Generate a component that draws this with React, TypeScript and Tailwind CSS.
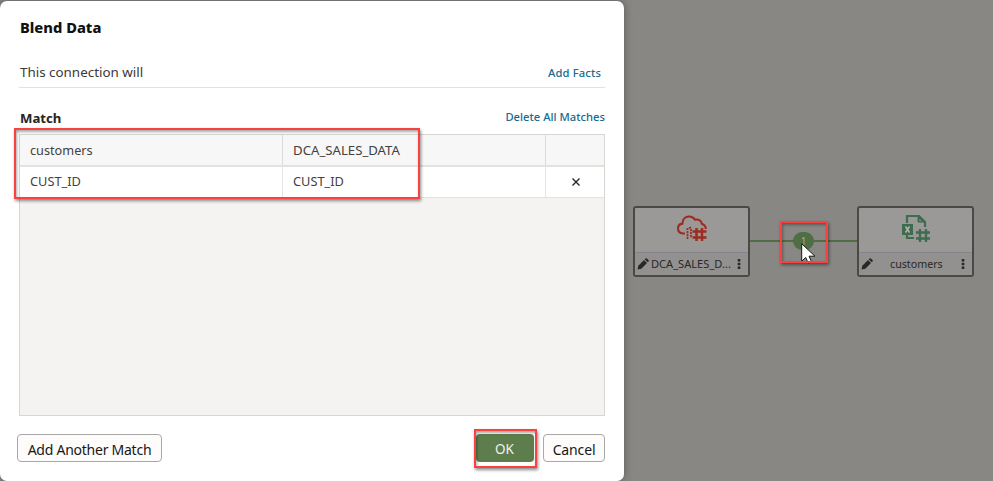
import React from "react";

const font = "font-['Noto_Sans','Open_Sans',sans-serif]";

function Highlight({ className }: { className: string }) {
  return (
    <div
      className={`pointer-events-none absolute z-20 border-[#f9423f] shadow-[1px_2px_3px_rgba(0,0,0,0.45),inset_1px_2px_3px_rgba(0,0,0,0.35)] ${className}`}
    />
  );
}

function CloudDataset() {
  return (
    <svg className="-mt-[4px] h-[28px] w-[32px]" viewBox="0 0 32 28" fill="none" stroke="#9c2b20">
      <path
        d="M9 19.500H7C3.800 19 2 16.900 2 14.400c0-2.600 1.700-4.500 4.400-4.800C6.500 5.300 9.200 2.500 13 2.500c2.700 0 4.800 1.200 6 3.200 4-.7 6.400 1.400 6.800 4 2.500.9 4 2.800 4 5.300"
        strokeWidth="2.100"
      />
      <path d="M10.500 15.500l5-2.500M11.500 17v8.500M15 15v9" strokeWidth="1.700" strokeDasharray="2.200 .7" />
      <path d="M20.500 14v13M26 14v13M16.500 17.500h14M16.500 23.500h14" strokeWidth="2.500" />
    </svg>
  );
}

function SheetDataset() {
  return (
    <svg className="-mt-[5px] h-[30px] w-[28px]" viewBox="0 0 28 30" fill="none" stroke="#3f6b4f">
      <path d="M5 10V3h12l6 6v5M5 20v5h7" strokeWidth="2.200" />
      <path d="M16 3v6h6z" fill="#3f6b4f" strokeWidth="1" />
      <path d="M17.500 6l2 2h-2z" fill="#9a9997" stroke="none" />
      <path d="M0 11h11v11H0z" fill="#3f6b4f" stroke="none" />
      <path d="M3.500 13.500l4 6M7.500 13.500l-4 6" stroke="#b0b6b0" strokeWidth="1.500" />
      <path d="M18 16v13M24 16v13M14 19.500h14M14 25.500h14" strokeWidth="2.300" />
    </svg>
  );
}

function Pencil() {
  return (
    <svg className="h-[12px] w-[12px] shrink-0" viewBox="0 0 12 12" fill="#292826">
      <path d="M1.300 7.700 7 2l3 3-5.700 5.700L.5 11.600zM7.700 1.300 8.500.5q.7-.6 1.400 0l1.600 1.600q.6.7 0 1.400l-.8.800z" />
    </svg>
  );
}

function Kebab() {
  return (
    <svg className="h-[10px] w-[4px] shrink-0" viewBox="0 0 4 10" fill="#292826">
      <path d="M.7 0h2.600v2.500H.7zM.7 3.700h2.600v2.500H.7zM.7 7.400h2.600v2.500H.7z" />
    </svg>
  );
}

function DatasetNode({ icon, label, labelClass }: { icon: React.ReactNode; label: string; labelClass: string }) {
  return (
    <div className="flex h-[71px] w-[117px] shrink-0 flex-col rounded-[3px] border-2 border-[#4b4946] bg-[#9a9997]">
      <div className="flex h-[45px] items-center justify-center border-b border-[#84848a]">{icon}</div>
      <div className="flex h-[22px] items-center bg-[#92918f] pl-[2px] pr-[7px]">
        <Pencil />
        <span className={`flex-1 whitespace-nowrap text-left leading-[14px] text-[#292826] ${labelClass}`}>{label}</span>
        <Kebab />
      </div>
    </div>
  );
}

function BlendDialog() {
  const button =
    "flex h-[28px] items-center justify-center rounded-[4px] border border-[#aaa8a6] bg-[#fdfcfb] pt-[2px] text-[14px] text-[#181716]";
  return (
    <section className="relative z-10 mt-px flex h-[480px] w-[624px] shrink-0 flex-col rounded-[7px] bg-white px-[19px] shadow-[0_0_9px_rgba(0,0,0,0.35)]">
      <h1 className="mt-[15px] h-[23px] pl-px text-[14.700px] font-extrabold leading-[22px] text-[#111]">Blend Data</h1>
      <div className="mt-[19px] flex h-[30px] items-start justify-between border-b border-[#e2e1e0] pl-px pr-[4px]">
        <span className="text-[13.400px] leading-[28px] text-[#3b3835]">This connection will</span>
        <a className="text-[11.200px] font-medium leading-[30px] tracking-[0.150px] text-[#176b8c]">Add Facts</a>
      </div>
      <div className="mt-[19px] flex h-[27px] items-start justify-between pl-px">
        <h2 className="text-[13.200px] font-bold leading-[23px] text-[#262422]">Match</h2>
        <a className="text-[11.200px] font-medium leading-[20px] tracking-[0.020px] text-[#176b8c]">Delete All Matches</a>
      </div>
      <div className="h-[282px] w-[586px] border border-[#d8d6d3] bg-[#f4f3f1] text-[13px] text-[#45413e]">
        <div className="grid h-[32px] grid-cols-[263px_263px_1fr] border-b-2 border-[#e4e2df] bg-[#f7f7f7]">
          <div className="flex items-center border-r border-[#dddbd8] pl-[10px] pt-[2px] text-[12.700px]">customers</div>
          <div className="flex items-center border-r border-[#dddbd8] pl-[10px] pt-[2px] text-[13.200px]">DCA_SALES_DATA</div>
          <div />
        </div>
        <div className="grid h-[31px] grid-cols-[263px_263px_1fr] border-b border-[#e4e2df] bg-white">
          <div className="flex items-center border-r border-[#e8e6e4] pb-px pl-[10px] text-[12.800px]">CUST_ID</div>
          <div className="flex items-center border-r border-[#e8e6e4] pb-px pl-[10px] text-[12.800px]">CUST_ID</div>
          <div className="flex items-center justify-center pl-px">
            <svg className="h-[8px] w-[8px]" viewBox="0 0 8 8" fill="none" stroke="#292725" strokeWidth="1.400">
              <path d="M.5.5l7 7M7.500.5l-7 7" />
            </svg>
          </div>
        </div>
      </div>
      <footer className="-ml-[2px] mt-[18px] flex items-center">
        <button className={`${button} w-[145px] tracking-[-0.250px]`}>Add Another Match</button>
        <button className="ml-auto mr-[9px] flex h-[28px] w-[58px] items-center justify-center rounded-[4px] bg-[#5e7d4c] pr-px pt-[2px] text-[13.500px] text-[#eef2ea]">OK</button>
        <button className={`${button} w-[62px] tracking-[-0.150px]`}>Cancel</button>
      </footer>
      <Highlight className="left-[14px] top-[127px] h-[71px] w-[406px] border-2" />
      <Highlight className="left-[474px] top-[428px] h-[39px] w-[63px] border-2" />
    </section>
  );
}

export default function App() {
  return (
    <main className={`flex h-[481px] w-[993px] overflow-hidden bg-[#898784] ${font}`}>
      <BlendDialog />
      <div className="relative flex flex-1 items-start pl-[9px] pt-[206px]">
        <DatasetNode icon={<CloudDataset />} label="DCA_SALES_D..." labelClass="pl-[2px] text-[11.100px]" />
        <div className="mt-[34px] flex h-[2px] w-[107px] items-center justify-center bg-[#4f6e43]">
          <span className="flex h-[18px] w-[21px] shrink-0 items-center justify-center rounded-[9px] bg-[#4f6e43] text-[10px] text-[#a5aaa0]">1</span>
        </div>
        <DatasetNode icon={<SheetDataset />} label="customers" labelClass="pl-[17px] text-[10.700px]" />
        <svg className="absolute left-[177px] top-[243px] z-10 h-[22px] w-[16px]" viewBox="0 0 16 22">
          <path d="M.7.7v17.500l4-3.700 2.500 5.500 3.300-1.400-2.500-5.400h6z" fill="#fff" stroke="#171717" />
        </svg>
        <Highlight className="left-[156px] top-[221px] h-[42px] w-[48px] border-[2.500px]" />
      </div>
    </main>
  );
}
